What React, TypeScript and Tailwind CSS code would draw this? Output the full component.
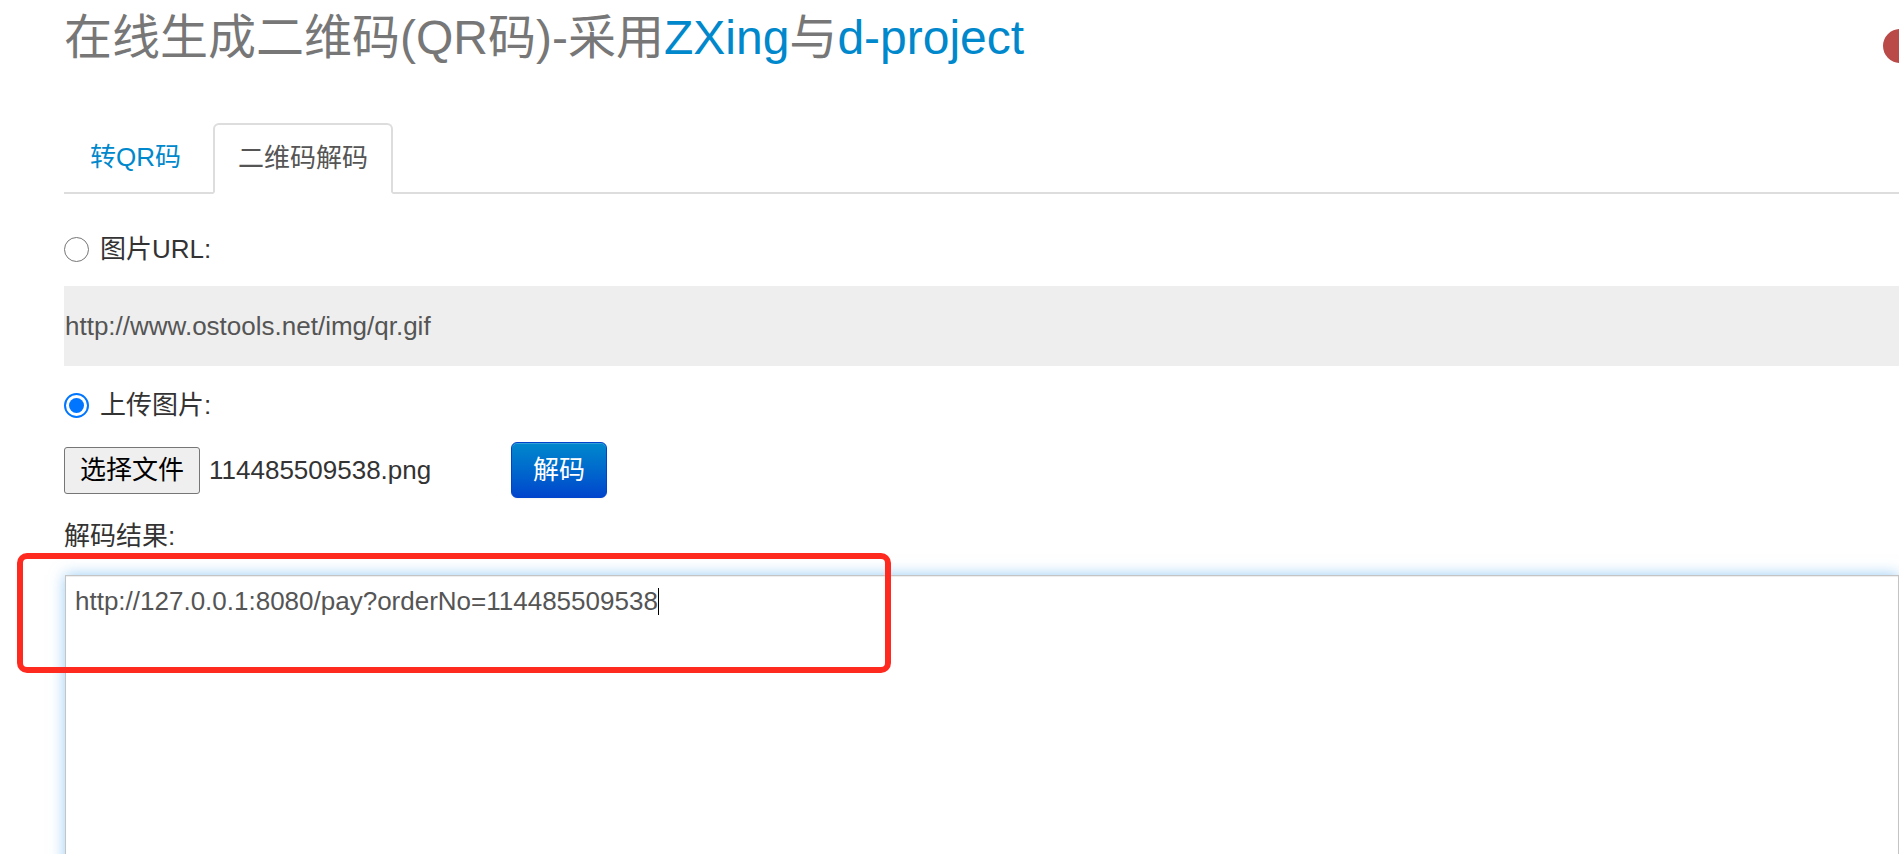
import React from "react";

const FONT = '"Liberation Sans", "Noto Sans CJK SC", sans-serif';

function Radio({ checked }: { checked: boolean }) {
  if (checked) {
    return (
      <span className="flex h-[25px] w-[25px] shrink-0 items-center justify-center rounded-full border-2 border-[#0075ff] bg-white">
        <span className="h-[15px] w-[15px] rounded-full bg-[#0075ff]" />
      </span>
    );
  }
  return <span className="h-[25px] w-[25px] shrink-0 rounded-full border border-[#767676] bg-white" />;
}

export default function App() {
  return (
    <div className="relative h-[854px] w-full overflow-hidden bg-white" style={{ fontFamily: FONT }}>
      <div className="pl-[64px]">
        <h1 className="pt-[10px] text-[48px] leading-[56px] font-normal whitespace-nowrap text-[#777]">
          在线生成二维码(QR码)-采用<span className="text-[#0088cc]">ZXing</span>与<span className="text-[#0088cc]">d-project</span>
        </h1>

        <ul className="mt-[57px] flex items-start border-b-2 border-[#ddd]">
          <li className="mr-[6px] flex h-[69px] items-center px-[26px] text-[26px] text-[#0088cc]">转QR码</li>
          <li className="-mb-[2px] flex h-[71px] items-center rounded-t-[6px] border-2 border-[#ddd] border-b-white bg-white px-[23px] text-[26px] text-[#555]">
            二维码解码
          </li>
        </ul>

        <div className="mt-[36px] flex h-[38px] items-center gap-[11px] text-[26px] text-[#333]">
          <Radio checked={false} />
          <span>图片URL:</span>
        </div>

        <div className="mt-[18px] flex h-[80px] items-center bg-[#eee] pl-[1px] text-[26px] text-[#555]">
          http://www.ostools.net/img/qr.gif
        </div>

        <div className="mt-[20px] flex h-[38px] items-center gap-[11px] text-[26px] text-[#333]">
          <Radio checked={true} />
          <span>上传图片:</span>
        </div>

        <div className="mt-[18px] flex h-[56px] items-center text-[26px]">
          <div className="flex w-[447px] items-center">
            <span className="flex h-[47px] items-center rounded-[3px] border border-[#767676] bg-[#efefef] px-[15px] text-black">
              选择文件
            </span>
            <span className="ml-[9px] text-[#333]">114485509538.png</span>
          </div>
          <span className="flex h-[56px] items-center rounded-[6px] border border-[#0044cc] bg-linear-to-b from-[#0088cc] to-[#0044cc] px-[21px] text-white shadow-[inset_0_1px_0_rgba(255,255,255,0.2),0_1px_2px_rgba(0,0,0,0.05)]">
            解码
          </span>
        </div>

        <div className="mt-[19px] flex h-[38px] items-center text-[26px] text-[#333]">解码结果:</div>

        <div className="mt-[20px] ml-[1px] h-[400px] border border-[#c4c4c4] bg-white px-[9px] pt-[6px] text-[26px] leading-[38px] text-[#555] shadow-[0_0_14px_rgba(82,168,236,0.6),inset_0_1px_1px_rgba(0,0,0,0.075)]">
          <span>http://127.0.0.1:8080/pay?orderNo=114485509538</span>
          <span className="inline-block h-[27px] w-[1px] translate-y-[5px] bg-black" />
        </div>
      </div>

      <div className="absolute top-[553px] left-[17px] h-[120px] w-[874px] rounded-[10px] border-[6px] border-[#ff2a1f]" />
      <div className="absolute top-[29px] left-[1883px] h-[34px] w-[34px] rounded-full bg-[#b94a48]" />
    </div>
  );
}
